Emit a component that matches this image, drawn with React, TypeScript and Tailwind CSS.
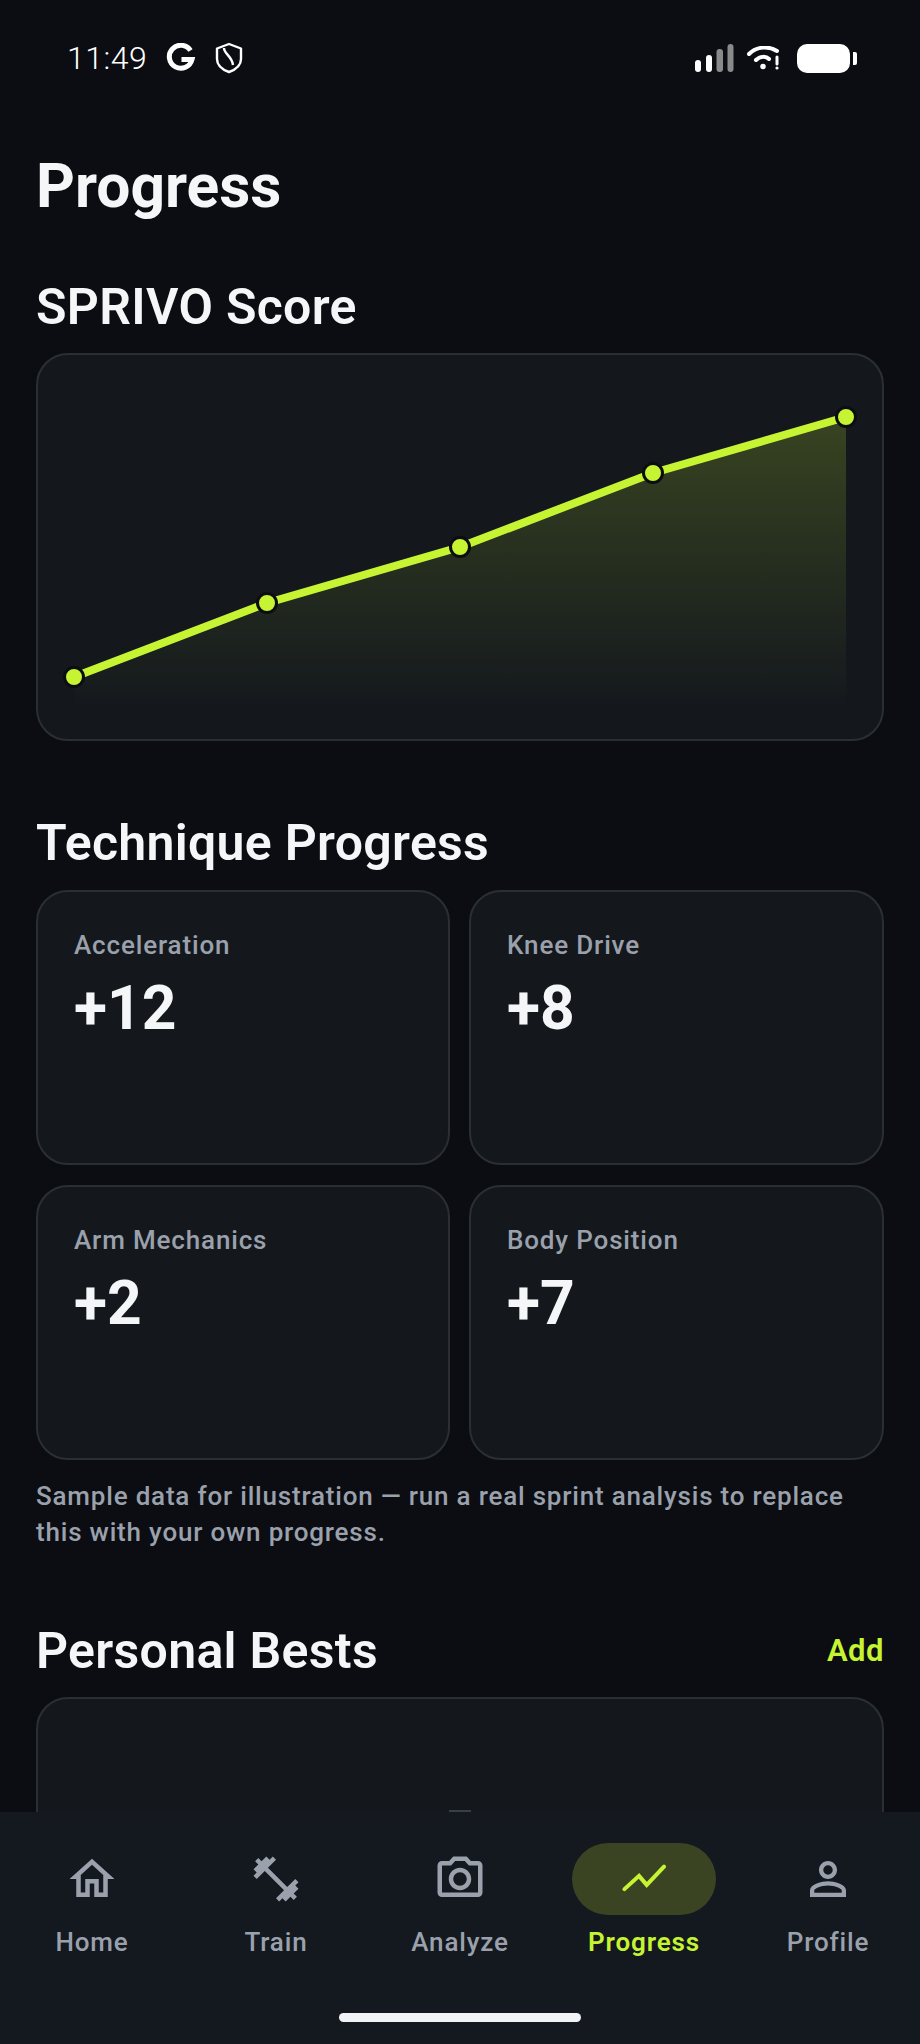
import React from "react";

const LIME = "#c6f432";
const G = "#9aa1ac";

function Gl() {
  return (
    <svg width="30" height="30" viewBox="0 0 30 30" fill="none">
      <path d="M24.500 7.500A11.500 11.500 0 1 0 26 16.500H15.500" stroke="white" strokeWidth="5" />
    </svg>
  );
}

function Shield() {
  return (
    <svg width="28" height="32" viewBox="0 0 28 32" fill="none" stroke="white" strokeWidth="2.4" strokeLinejoin="round">
      <path d="M14 2 26 6.500V17c0 6-5 10.500-12 13C7 27.500 2 23 2 17V6.500Z" />
      <path d="M9 6c0 6 8 8 9 17" />
    </svg>
  );
}

function StatusRight() {
  return (
    <div className="flex items-center">
      <svg width="39" height="28" viewBox="0 0 39 28">
        <rect x="0" y="16" width="6" height="12" rx="3" fill="#fff" />
        <rect x="11" y="11" width="6" height="17" rx="3" fill="#fff" />
        <rect x="21.500" y="5" width="6.500" height="23" rx="3" fill="#8a8a8a" />
        <rect x="32.500" y="0" width="6" height="28" rx="3" fill="#8a8a8a" />
      </svg>
      <svg className="ml-[13px]" width="32" height="24" viewBox="0 0 32 24" fill="none" stroke="#fff" strokeLinecap="round">
        <path d="M2 8C10 0 22 0 30 5" strokeWidth="4" />
        <path d="M9 14c4-4 10-4 13-1" strokeWidth="4" />
        <circle cx="16" cy="20.500" r="2" fill="#fff" strokeWidth="1.500" />
        <path d="M30 11v7" strokeWidth="3" />
        <circle cx="30" cy="22" r="0.800" fill="#fff" strokeWidth="1.600" />
      </svg>
      <div className="ml-[18px] flex items-center gap-[3px]">
        <div className="w-[53px] h-[29px] rounded-[10px] bg-white" />
        <div className="w-[4px] h-[13px] rounded-r-[2px] bg-white" />
      </div>
    </div>
  );
}

function Chart() {
  const pts: [number, number][] = [[36, 322], [229, 248], [422, 192], [615, 118], [808, 62]];
  const line = pts.map((p) => p.join(",")).join(" ");
  return (
    <svg width="844" height="384" viewBox="0 0 844 384" className="block">
      <defs>
        <linearGradient id="fillG" x1="0" y1="0" x2="0" y2="1">
          <stop offset="0" stopColor={LIME} stopOpacity="0.2" />
          <stop offset="1" stopColor={LIME} stopOpacity="0" />
        </linearGradient>
      </defs>
      <polygon points={`${line} 808,352 36,352`} fill="url(#fillG)" />
      <polyline points={line} fill="none" stroke={LIME} strokeWidth="8" />
      {pts.map(([x, y]) => (
        <circle key={x} cx={x} cy={y} r="9.500" fill={LIME} stroke="#0b0d12" strokeWidth="3" />
      ))}
    </svg>
  );
}

function Stat({ label, value }: { label: string; value: string }) {
  return (
    <div className="h-[275px] rounded-[32px] border-2 border-[#2a2f37] bg-[#14181d] px-[36px] pt-[38px]">
      <div className="text-[26px] leading-[30px] font-medium tracking-[0.85px] text-[#9aa1ac]">{label}</div>
      <div className="mt-[13px] text-[60.5px] leading-[72px] font-bold text-[#f5f6f8]">{value}</div>
    </div>
  );
}

function NavItem({ label, children, active }: { label: string; children: React.ReactNode; active?: boolean }) {
  return (
    <div className="flex-1 flex flex-col items-center">
      <div className={`w-[144px] h-[72px] rounded-full flex items-center justify-center ${active ? "bg-[#3a4423]" : ""}`}>
        {children}
      </div>
      <div className={`mt-[11px] text-[26px] leading-[32px] tracking-[0.85px] ${active ? "font-semibold text-[#c6f432]" : "font-medium text-[#9aa1ac]"}`}>
        {label}
      </div>
    </div>
  );
}

function MI({ d }: { d: string }) {
  return (
    <svg width="54" height="54" viewBox="0 0 24 24" fill={G}>
      <path d={d} />
    </svg>
  );
}

export default function App() {
  return (
    <div className="w-[920px] h-[2044px] flex flex-col overflow-hidden bg-[#0b0d12] font-['Roboto',sans-serif]">
      <div className="flex-1 min-h-0 overflow-hidden">
        <div className="h-[116px] flex items-center justify-between pl-[67px] pr-[63px]">
          <div className="flex items-center">
            <span className="text-[32px] font-light tracking-[0.5px] text-white">11:49</span>
            <span className="ml-[19px]"><Gl /></span>
            <span className="ml-[19px]"><Shield /></span>
          </div>
          <StatusRight />
        </div>
        <div className="px-[36px]">
          <h1 className="mt-[35px] text-[60.5px] leading-[72px] font-bold text-[#f5f6f8]">Progress</h1>
          <h2 className="mt-[56px] text-[50px] leading-[56px] font-semibold tracking-[0.3px] text-[#f5f6f8]">SPRIVO Score</h2>
          <div className="mt-[18px] h-[388px] rounded-[32px] border-2 border-[#2a2f37] bg-[#14181d] overflow-hidden">
            <Chart />
          </div>
          <h2 className="mt-[74px] text-[50px] leading-[56px] font-semibold tracking-[0.3px] text-[#f5f6f8]">Technique Progress</h2>
          <div className="mt-[19px] grid grid-cols-[414px_415px] gap-x-[19px] gap-y-[20px]">
            <Stat label="Acceleration" value="+12" />
            <Stat label="Knee Drive" value="+8" />
            <Stat label="Arm Mechanics" value="+2" />
            <Stat label="Body Position" value="+7" />
          </div>
          <p className="mt-[18px] text-[26px] leading-[36px] font-medium tracking-[0.8px] text-[#9aa1ac]">
            Sample data for illustration — run a real sprint analysis to replace this with your own progress.
          </p>
          <div className="mt-[73px] flex items-center justify-between">
            <h2 className="text-[50px] leading-[56px] font-semibold tracking-[0.3px] text-[#f5f6f8]">Personal Bests</h2>
            <span className="text-[31px] font-semibold tracking-[0.5px] text-[#c6f432]">Add</span>
          </div>
          <div className="mt-[18px] h-[300px] rounded-[32px] border-2 border-[#2a2f37] bg-[#14181d] flex justify-center pt-[111px]">
            <div className="w-[22px] h-[2px] bg-[#3a3f47]" />
          </div>
        </div>
      </div>
      <div className="h-[232px] shrink-0 bg-[#14181f] pt-[31px] relative">
        <div className="flex">
          <NavItem label="Home">
            <MI d="M12 5.690l5 4.500V18h-2v-6H9v6H7v-7.810l5-4.500M12 3L2 12h3v8h6v-6h2v6h6v-8h3L12 3z" />
          </NavItem>
          <NavItem label="Train">
            <MI d="M20.570 14.860L22 13.430 20.570 12 17 15.570 8.430 7 12 3.430 10.570 2 9.140 3.430 7.710 2 5.570 4.140 4.140 2.710 2.710 4.140l1.430 1.430L2 7.710l1.430 1.430L2 10.570 3.430 12 7 8.430 15.570 17 12 20.570 13.430 22l1.430-1.430L16.290 22l2.140-2.140 1.430 1.430 1.430-1.430-1.430-1.430L22 16.290z" />
          </NavItem>
          <NavItem label="Analyze">
            <MI d="M20 4h-3.170L15 2H9L7.170 4H4c-1.100 0-2 .9-2 2v12c0 1.100.9 2 2 2h16c1.100 0 2-.9 2-2V6c0-1.100-.9-2-2-2zm0 14H4V6h4.050l1.830-2h4.240l1.830 2H20v12zM12 7c-2.760 0-5 2.240-5 5s2.240 5 5 5 5-2.240 5-5-2.240-5-5-5zm0 8c-1.650 0-3-1.350-3-3s1.350-3 3-3 3 1.350 3 3-1.350 3-3 3z" />
          </NavItem>
          <NavItem label="Progress" active>
            <svg width="54" height="54" viewBox="0 0 24 24" fill="none" stroke={LIME} strokeWidth="1.800" strokeLinecap="round" strokeLinejoin="miter">
              <path d="M3.300 16.500 9.800 10.600l3.400 4L20.900 6.500" />
            </svg>
          </NavItem>
          <NavItem label="Profile">
            <MI d="M12 5.900a2.100 2.100 0 110 4.200 2.100 2.100 0 010-4.200m0 9c2.970 0 6.100 1.460 6.100 2.100v1.100H5.900V17c0-.64 3.130-2.100 6.100-2.100M12 4C9.790 4 8 5.790 8 8s1.790 4 4 4 4-1.790 4-4-1.790-4-4-4zm0 9c-2.670 0-8 1.340-8 4v3h16v-3c0-2.660-5.330-4-8-4z" />
          </NavItem>
        </div>
        <div className="absolute left-[339px] top-[201px] w-[242px] h-[9px] rounded-full bg-[#f2f3f5]" />
      </div>
    </div>
  );
}
